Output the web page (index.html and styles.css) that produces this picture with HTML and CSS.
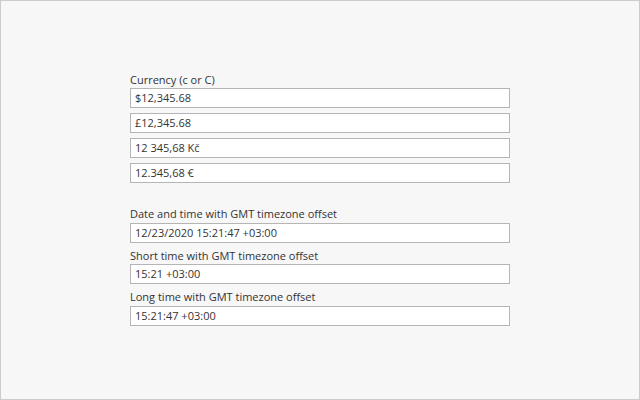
FILE: index.html
```html
<!DOCTYPE html>
<html>
<head>
<meta charset="utf-8">
<link rel="stylesheet" href="styles.css">
</head>
<body>
<div class="frame">
  <div class="form">
    <div class="group">
      <div class="label">Currency (c or C)</div>
      <div class="field">$12,345.68</div>
      <div class="field">£12,345.68</div>
      <div class="field">12 345,68 Kč</div>
      <div class="field">12.345,68 €</div>
    </div>
    <div class="group second">
      <div class="label">Date and time with GMT timezone offset</div>
      <div class="field">12/23/2020 15:21:47 +03:00</div>
      <div class="label">Short time with GMT timezone offset</div>
      <div class="field">15:21 +03:00</div>
      <div class="label">Long time with GMT timezone offset</div>
      <div class="field">15:21:47 +03:00</div>
    </div>
  </div>
</div>
</body>
</html>
```
FILE: styles.css
```css
* { box-sizing: border-box; }
html, body { margin: 0; padding: 0; }
body {
  width: 640px;
  height: 400px;
  font-family: "Open Sans", "Noto Sans", sans-serif;
  font-size: 11px;
  color: #333;
}
.frame {
  width: 640px;
  height: 400px;
  background: #f7f7f7;
  border: 1px solid #cccccc;
  padding: 71px 0 0 129px;
}
.form {
  width: 380px;
  display: flex;
  flex-direction: column;
}
.group {
  display: flex;
  flex-direction: column;
}
.second { margin-top: 18px; }
.label {
  height: 16px;
  line-height: 16px;
  color: #333;
}
.second .label {
  height: 16.5px;
}
.field {
  height: 20px;
  line-height: 18px;
  border: 1px solid #b5b5b5;
  background: #fff;
  padding: 0 4px;
  margin-bottom: 5px;
  color: #333;
}
```
